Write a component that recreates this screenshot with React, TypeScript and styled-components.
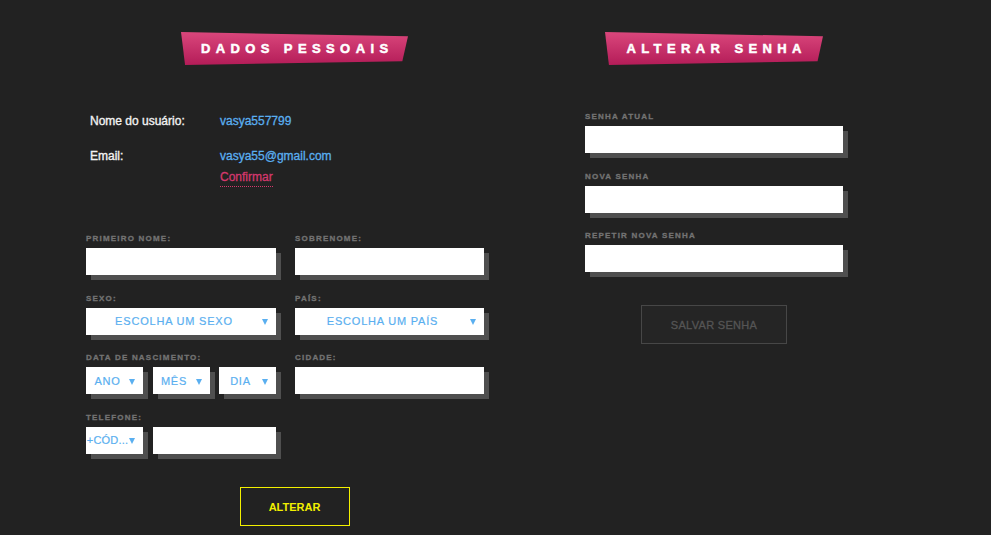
import React from "react";
import styled, { createGlobalStyle } from "styled-components";

const GlobalStyle = createGlobalStyle`
  html, body {
    margin: 0;
    padding: 0;
    background: #222222;
    font-family: "Liberation Sans", Arial, sans-serif;
  }
  * { box-sizing: border-box; }
`;

const Page = styled.div`
  display: flex;
  align-items: flex-start;
  gap: 82px;
  padding: 32px 0 0 86px;
  min-height: 535px;
  background: #222222;
`;

const Column = styled.div<{ $width: number }>`
  width: ${(p) => p.$width}px;
  display: flex;
  flex-direction: column;
  align-items: flex-start;
`;

const Banner = styled.div<{ $width: number }>`
  align-self: center;
  width: ${(p) => p.$width}px;
  height: 33px;
  line-height: 33px;
  background: linear-gradient(#da477c, #b41c58);
  clip-path: polygon(0 0, 100% 13%, 97.5% 89%, 1.8% 100%);
  color: #ffffff;
  font-weight: bold;
  font-size: 13px;
  letter-spacing: 5.4px;
  padding-left: 5.4px;
  text-align: center;
  white-space: nowrap;
  -webkit-text-stroke: 0.5px #ffffff;
`;

const InfoGrid = styled.div`
  margin-top: 48.5px;
  padding-left: 4px;
  display: grid;
  grid-template-columns: 130px auto;
  row-gap: 21px;
  font-size: 12px;
  line-height: 14px;
`;

const InfoLabel = styled.div`
  color: #f2f2f2;
  -webkit-text-stroke: 0.35px #f2f2f2;
`;

const InfoValue = styled.div`
  color: #5aaff0;
  display: flex;
  flex-direction: column;
  align-items: flex-start;
  gap: 7.5px;
  -webkit-text-stroke: 0.3px #5aaff0;
`;

const ConfirmLink = styled.span`
  color: #d4386d;
  padding-bottom: 2px;
  border-bottom: 1px dotted #d4386d;
  -webkit-text-stroke: 0.3px #d4386d;
`;

const FormGrid = styled.div<{ $cols: string; $top: number }>`
  margin-top: ${(p) => p.$top}px;
  display: grid;
  grid-template-columns: ${(p) => p.$cols};
  column-gap: 19px;
  row-gap: 18.5px;
`;

const Field = styled.div`
  display: flex;
  flex-direction: column;
  gap: 4px;
`;

const Label = styled.div`
  font-size: 8px;
  line-height: 10px;
  font-weight: bold;
  letter-spacing: 1.2px;
  color: #737373;
  white-space: nowrap;
  -webkit-text-stroke: 0.3px #737373;
`;

const Input = styled.div`
  height: 27px;
  background: #ffffff;
  box-shadow: 5px 5px 0 #4f4f4f;
`;

const Select = styled.div`
  height: 27px;
  background: #ffffff;
  box-shadow: 5px 5px 0 #4f4f4f;
  display: flex;
  align-items: center;
  padding-right: 8px;
  color: #5aaff0;
  font-size: 11px;
  letter-spacing: 0.8px;
  white-space: nowrap;
  -webkit-text-stroke: 0.2px #5aaff0;
`;

const SelectText = styled.span<{ $tight?: boolean }>`
  flex: 1;
  min-width: 0;
  text-align: center;
  letter-spacing: ${(p) => (p.$tight ? "0.2px" : "0.8px")};
`;

const Arrow = styled.span`
  flex: none;
  width: 0;
  height: 0;
  margin-top: 2px;
  border-left: 3.5px solid transparent;
  border-right: 3.5px solid transparent;
  border-top: 6px solid #5aaff0;
`;

const SplitRow = styled.div<{ $cols: string }>`
  display: grid;
  grid-template-columns: ${(p) => p.$cols};
  column-gap: 9.5px;
`;

const Button = styled.button<{ $width: number; $variant: "yellow" | "muted"; $top: number }>`
  align-self: center;
  margin-top: ${(p) => p.$top}px;
  width: ${(p) => p.$width}px;
  height: 39px;
  font-family: "Liberation Sans", Arial, sans-serif;
  font-size: 11px;
  padding: 0;
  cursor: pointer;
  ${(p) =>
    p.$variant === "yellow"
      ? `
    background: transparent;
    border: 1px solid #f2f000;
    color: #f2f000;
    font-weight: bold;
  `
      : `
    background: #252525;
    border: 1px solid #474747;
    color: #555555;
    letter-spacing: 0.3px;
    -webkit-text-stroke: 0.3px #555555;
  `}
`;

const DropSelect: React.FC<{ text: string; tight?: boolean }> = ({ text, tight }) => (
  <Select>
    <SelectText $tight={tight}>{text}</SelectText>
    <Arrow />
  </Select>
);

export default function App() {
  return (
    <>
      <GlobalStyle />
      <Page>
        <Column $width={417}>
          <Banner $width={227}>DADOS PESSOAIS</Banner>
          <InfoGrid>
            <InfoLabel>Nome do usuário:</InfoLabel>
            <InfoValue>vasya557799</InfoValue>
            <InfoLabel>Email:</InfoLabel>
            <InfoValue>
              <span>vasya55@gmail.com</span>
              <ConfirmLink>Confirmar</ConfirmLink>
            </InfoValue>
          </InfoGrid>
          <FormGrid $cols="190px 189px" $top={47}>
            <Field>
              <Label>PRIMEIRO NOME:</Label>
              <Input />
            </Field>
            <Field>
              <Label>SOBRENOME:</Label>
              <Input />
            </Field>
            <Field>
              <Label>SEXO:</Label>
              <DropSelect text="ESCOLHA UM SEXO" />
            </Field>
            <Field>
              <Label>PAÍS:</Label>
              <DropSelect text="ESCOLHA UM PAÍS" />
            </Field>
            <Field>
              <Label>DATA DE NASCIMENTO:</Label>
              <SplitRow $cols="1fr 1fr 1fr">
                <DropSelect text="ANO" />
                <DropSelect text="MÊS" />
                <DropSelect text="DIA" />
              </SplitRow>
            </Field>
            <Field>
              <Label>CIDADE:</Label>
              <Input />
            </Field>
            <Field>
              <Label>TELEFONE:</Label>
              <SplitRow $cols="57px 1fr">
                <DropSelect text="+CÓD..." tight />
                <Input />
              </SplitRow>
            </Field>
          </FormGrid>
          <Button $width={110} $variant="yellow" $top={33.5}>
            ALTERAR
          </Button>
        </Column>
        <Column $width={258}>
          <Banner $width={218}>ALTERAR SENHA</Banner>
          <FormGrid $cols="258px" $top={47}>
            <Field>
              <Label>SENHA ATUAL</Label>
              <Input />
            </Field>
            <Field>
              <Label>NOVA SENHA</Label>
              <Input />
            </Field>
            <Field>
              <Label>REPETIR NOVA SENHA</Label>
              <Input />
            </Field>
          </FormGrid>
          <Button $width={146} $variant="muted" $top={33}>
            SALVAR SENHA
          </Button>
        </Column>
      </Page>
    </>
  );
}
